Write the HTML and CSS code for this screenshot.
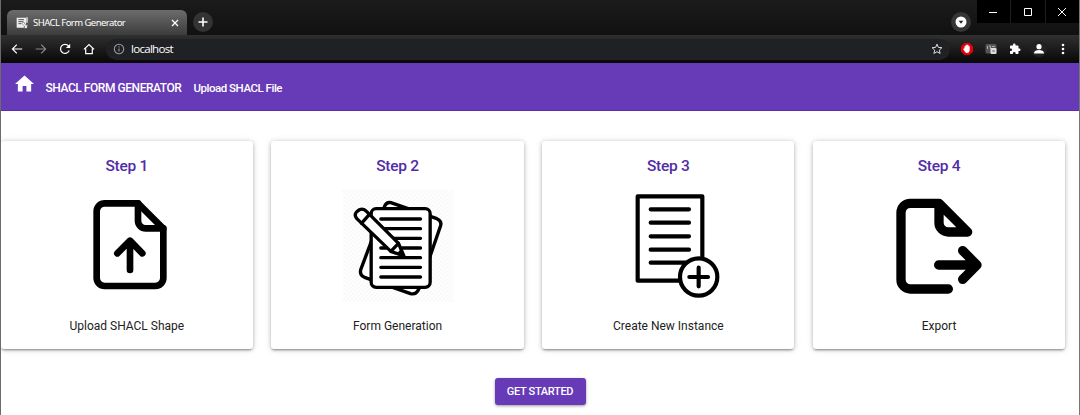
FILE: index.html
```html
<!DOCTYPE html>
<html lang="en">
<head>
<meta charset="utf-8">
<title>SHACL Form Generator</title>
<link rel="stylesheet" href="styles.css">
</head>
<body>
<div class="window">
  <div class="tabstrip">
    <div class="tab">
      <svg class="favicon" viewBox="0 0 36 36"><path d="M2 2h28v20l-7 10H2z" fill="#eee"/><path d="M7 8h17M7 14h15M7 20h9" stroke="#555" stroke-width="3"/><path d="M18 19l5-4 6 10 6-3-2 12H22l5-4z" fill="#fff" stroke="#444" stroke-width="1.5"/><path d="M33 1v16" stroke="#eee" stroke-width="4"/></svg>
      <span class="tab-title">SHACL Form Generator</span>
      <svg class="tab-close" viewBox="0 0 8 8"><path d="M1 1l6 6M7 1L1 7"/></svg>
    </div>
    <div class="new-tab"><svg viewBox="0 0 10 10"><path d="M5 .5v9M.5 5h9"/></svg></div>
    <div class="tab-search"><svg viewBox="0 0 12 12"><circle cx="6" cy="6" r="5.500" fill="#fff"/><path d="M3.700 4.700h4.600L6 7.800z" fill="#222"/></svg></div>
    <div class="controls">
      <span class="control"><svg viewBox="0 0 10 10"><path d="M1 5.500h8"/></svg></span>
      <span class="control"><svg viewBox="0 0 10 10"><path d="M1.500 1.500h7v7h-7z"/></svg></span>
      <span class="control"><svg viewBox="0 0 10 10"><path d="M1 1l8 8M9 1L1 9"/></svg></span>
    </div>
  </div>
  <div class="toolbar">
    <div class="nav-icons">
      <svg viewBox="0 0 12 12"><path d="M11.200 6H1.500M5.800 1.600L1.400 6l4.400 4.400"/></svg>
      <svg class="dim" viewBox="0 0 12 12"><path d="M.8 6h9.700M6.200 1.600L10.600 6l-4.400 4.400"/></svg>
      <svg viewBox="0 0 12 12"><path d="M10.200 7.600A4.500 4.500 0 1 1 9.500 3L10.600 4.400"/><path d="M11.200.8v4.300H6.900z" fill="#fff" stroke="none"/></svg>
      <svg viewBox="0 0 12 12"><path d="M.9 6.400L6 1.600l5.100 4.800M2.700 5.600v5h6.600v-5"/></svg>
    </div>
    <div class="address">
      <svg class="info" viewBox="0 0 12 12"><circle cx="6" cy="6" r="4.700"/><path d="M6 5.400v3.200M6 3.200v1.200"/></svg>
      <span class="url">localhost</span>
      <svg class="star" viewBox="0 0 12 12"><path d="M6 1.200l1.400 3.200 3.500.3-2.600 2.400.8 3.400L6 8.700l-3.100 1.800.8-3.400L1.100 4.700l3.500-.3z"/></svg>
    </div>
    <div class="extensions">
      <svg viewBox="0 0 14 14"><path d="M4.500 1h5L13 4.500v5L9.500 13h-5L1 9.500v-5z" fill="#e8000b"/><path d="M4.500 6.300V4.200h1v-1h1.100v-.7h1v.7h1.100v1h1v4.300q-.5 2.500-2.700 2.500-1.200 0-2.200-1.500L3.200 7.300l.6-.7z" fill="#fff"/></svg>
      <svg viewBox="0 0 14 14"><rect x="1.500" y="2" width="11" height="9.500" rx="1.500" fill="#555"/><path d="M3.500 4v3M5 4h1.500v3M8 4.500h3" stroke="#aaa" fill="none"/><rect x="6.500" y="6" width="6" height="6" rx="1" fill="#ddd"/><path d="M8.300 9h2.500" stroke="#555"/></svg>
      <svg viewBox="0 0 24 24"><path fill="#fff" d="M20.500 11H19V7c0-1.100-.9-2-2-2h-4V3.500a2.500 2.500 0 0 0-5 0V5H4c-1.100 0-2 .9-2 2v3.800h1.500a2.700 2.700 0 0 1 0 5.400H2V20c0 1.100.9 2 2 2h3.800v-1.500a2.700 2.700 0 0 1 5.400 0V22H17c1.100 0 2-.9 2-2v-4h1.500a2.500 2.500 0 0 0 0-5z"/></svg>
      <svg class="avatar" viewBox="0 0 16 16"><circle cx="8" cy="8" r="8" fill="#202124"/><circle cx="8" cy="5.700" r="2.600" fill="#fff"/><path d="M3 12.500V12c0-4 10-4 10 0v.5z" fill="#fff"/></svg>
      <svg viewBox="0 0 14 14"><g fill="#fff"><circle cx="7" cy="3" r="1.300"/><circle cx="7" cy="7" r="1.300"/><circle cx="7" cy="11" r="1.300"/></g></svg>
    </div>
  </div>

  <nav class="navbar">
    <svg class="home" viewBox="2 3 20 17"><path d="M10 20v-6h4v6h5v-8h3L12 3 2 12h3v8z"/></svg>
    <span class="brand">SHACL FORM GENERATOR</span>
    <span class="link">Upload SHACL File</span>
  </nav>

  <main class="content">
    <div class="cards">
      <section class="card">
        <h2>Step 1</h2>
        <svg class="art" viewBox="201 171 360 360"><g stroke-width="20"><path d="M414 220H314a24 24 0 0 0-24 24V444a24 24 0 0 0 24 24H466a24 24 0 0 0 24-24V296Z"/><path d="M414 220V272a23 23 0 0 0 23 23H490"/><path d="M390 420V334M352 370L390 332L427 370"/></g></svg>
        <p>Upload SHACL Shape</p>
      </section>
      <section class="card">
        <h2>Step 2</h2>
        <svg class="art" viewBox="22.5 21 360 360">
          <defs><pattern id="hatch" width="12" height="12" patternUnits="userSpaceOnUse"><path d="M0 12L12 0" stroke="#f3f3f3" stroke-width="3"/></pattern></defs>
          <rect x="36" y="30" width="334" height="336" fill="url(#hatch)" stroke="none"/>
          <g stroke-width="10"><path fill="#fff" d="M161 82Q167 65 181 68L319 116Q335 123 330 138L265 327Q257 345 240 341L102 292Q86 285 91 268Z"/>
          <rect x="122" y="86" width="177" height="236" rx="15" fill="#fff"/>
          <path d="M151 117H270M151 146H270M151 175H270M151 204H270M151 233H270M151 262H270M151 291H270"/>
          <path fill="#fff" d="M79 116Q70 105 78 96L87 89Q99 84 108 94L204 190L220 228L181 214Z"/><path d="M93 130L116 104M181 214L204 190"/><path d="M206 218L220 228L213 211Z" fill="#000" stroke-width="7"/></g>
        </svg>
        <p>Form Generation</p>
      </section>
      <section class="card">
        <h2>Step 3</h2>
        <svg class="art" viewBox="-36 21 360 360"><g stroke-width="12.500"><path d="M53 49H247V302H53Z"/><path d="M92 88H207M92 128H207M92 169H207M92 209H207M92 248H207"/><circle cx="236" cy="291" r="56" fill="#fff"/><path d="M208 291H264M236 263V319"/></g></svg>
        <p>Create New Instance</p>
      </section>
      <section class="card">
        <h2>Step 4</h2>
        <svg class="art" viewBox="-3 21 360 360"><g stroke-width="28"><path d="M205 327H91a28 28 0 0 1-28-28V98a28 28 0 0 1 28-28H177L263 156H205a28 28 0 0 1-28-28V70"/><path d="M176 255H290M248 212L291 255L248 298"/></g></svg>
        <p>Export</p>
      </section>
    </div>
    <button class="start">GET STARTED</button>
  </main>
</div>
</body>
</html>
```

FILE: styles.css
```css
* { box-sizing: border-box; }
body { margin: 0; background: #fff; font-family: Roboto, "Liberation Sans", sans-serif; overflow: hidden; }
svg { display: block; flex: none; }
.window { height: 415px; border-left: 1px solid #6b6b6b; border-right: 1px solid #777; overflow: hidden; }

.tabstrip { height: 35px; display: flex; align-items: flex-start; background: linear-gradient(#1b1b1b, #111); padding-left: 6px; }
.tab { width: 180px; height: 25px; margin-top: 10px; border-radius: 6px 6px 0 0; background: linear-gradient(#6c6c6c, #3c3c3c); display: flex; align-items: center; padding: 0 8px 0 9px; }
.favicon { width: 12px; height: 12px; }
.tab-title { margin-left: 5px; flex: 1; white-space: nowrap; font: 9.500px/25px "Noto Sans", sans-serif; letter-spacing: -0.550px; color: #fff; }
.tab-close { width: 8px; height: 8px; stroke: #fff; stroke-width: 1.300; }
.new-tab { width: 20px; height: 20px; margin: 12px 0 0 6px; border-radius: 50%; background: #333; display: grid; place-items: center; }
.new-tab svg { width: 10px; height: 10px; stroke: #fff; stroke-width: 1.600; }
.tab-search { width: 20px; height: 20px; margin: 12px 6px 0 auto; border-radius: 50%; background: #353535; display: grid; place-items: center; }
.tab-search svg { width: 12px; height: 12px; }
.controls { display: flex; gap: 1px; background: #1d1d1d; }
.control { width: 33.500px; height: 23px; background: #000; display: grid; place-items: center; }
.control svg { width: 10px; height: 10px; fill: none; stroke: #fff; stroke-width: 1; }

.toolbar { height: 28px; display: flex; align-items: center; background: linear-gradient(#303030, #070707); padding: 0 9px 0 10px; }
.nav-icons { display: flex; gap: 12px; }
.nav-icons svg { width: 12px; height: 12px; fill: none; stroke: #fff; stroke-width: 1.200; }
.nav-icons .dim { stroke: #888; }
.address { height: 21px; flex: 1; margin-left: 11px; padding: 0 7px; border-radius: 11px; background: #202124; display: flex; align-items: center; }
.info { width: 12px; height: 12px; fill: none; stroke: #9a9a9a; stroke-width: 1.100; }
.url { margin-left: 6px; flex: 1; color: #fff; font: 11.500px/20px "Open Sans", sans-serif; letter-spacing: -0.700px; }
.star { width: 12px; height: 12px; fill: none; stroke: #ddd; stroke-width: 1; }
.extensions { display: flex; align-items: center; gap: 10px; margin-left: 10px; }
.extensions svg { width: 14px; height: 14px; }
.extensions svg:nth-child(3) { width: 12px; height: 12px; margin: 0 1px; }
.extensions .avatar { width: 16px; height: 16px; margin: 0 -1px; }

.navbar { height: 48px; display: flex; align-items: center; background: #673ab7; border-bottom: 1px solid #5e2cad; color: #fff; padding: 2px 0 0 13.500px; font-size: 12px; font-weight: 500; white-space: nowrap; }
.home { width: 19px; height: 17px; fill: #fff; margin-bottom: 9px; }
.brand { margin-left: 12px; width: 148px; letter-spacing: -0.450px; }
.link { font-size: 11.500px; letter-spacing: -0.480px; }

.content { padding-top: 30px; display: flex; flex-direction: column; align-items: center; }
.cards { width: 1064.500px; align-self: flex-start; margin-left: -0.300px; display: grid; grid-template-columns: repeat(4, 1fr); gap: 18.500px; }
.card { height: 207.500px; border-radius: 3px; background: #fff; box-shadow: 0 2px 2px -1px rgba(0,0,0,.32), 0 1px 4px rgba(0,0,0,.24), 0 0 8px rgba(0,0,0,.08); display: flex; flex-direction: column; align-items: center; padding-top: 15px; }
.card h2 { margin: 0; font-size: 15.500px; line-height: 20px; font-weight: 500; letter-spacing: -0.250px; color: #512da8; }
.art { width: 120px; height: 120px; margin-top: 11px; fill: none; stroke: #000; stroke-linecap: round; stroke-linejoin: round; }
.card p { margin: 9px 0 0; font-size: 12px; line-height: 20px; color: #222; }
.start { margin: 29.500px 0 0; width: 91px; height: 27px; padding: 1px 0 0; border: 0; border-radius: 3px; background: #673ab7; color: #fff; font: 500 11px/26px Roboto, sans-serif; letter-spacing: -0.300px; box-shadow: 0 1px 3px rgba(0,0,0,.4); }
```
